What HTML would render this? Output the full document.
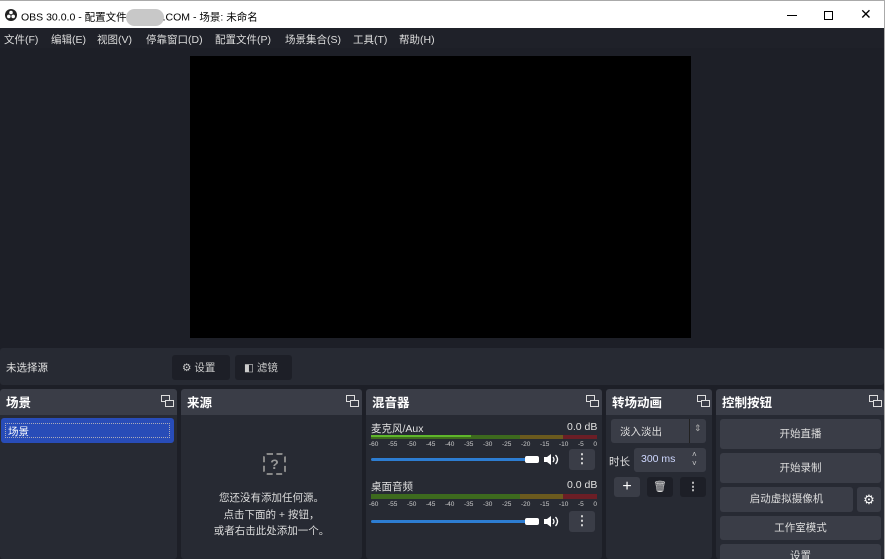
<!DOCTYPE html>
<html style="overflow:hidden;width:887px;height:559px"><head><meta charset="utf-8"><style>
*{box-sizing:border-box;margin:0;padding:0}
body{width:887px;height:559px;background:#fff;font-family:"Liberation Sans","Noto Sans CJK SC",sans-serif;font-size:11px;color:#e0e0e0;position:relative;overflow:hidden}
.a{position:absolute}
.win{left:0;top:0;width:885px;height:559px;border-right:1px solid #aaa;border-top:1px solid #aaa;background:#1d1f27}
.title{left:0;top:1px;width:884px;height:27px;background:#fff;color:#000;font-size:11px}
.menu{left:0;top:28px;width:884px;height:20px;background:#1f2129;color:#ddd}
.menu span{position:absolute;top:4px;font-size:10.5px}
.dock{background:#272a33;border-radius:3px;overflow:hidden}
.hd{background:#3a3d47;height:26px;border-radius:3px 3px 0 0;font-size:12.5px;font-weight:bold;color:#fff;padding:3px 6px}
.btn{background:#3a3d47;border-radius:3px;text-align:center;color:#ddd;font-size:10.5px}
.dk{background:#1d1f27;border-radius:3px}
.scale{font-size:6.5px;color:#ccc;width:228px;display:flex;justify-content:space-between}
</style></head><body>
<div class="a win"></div>
<div class="a title">
<svg class="a" style="left:5px;top:8px" width="12" height="12" viewBox="0 0 12 12"><circle cx="6" cy="6" r="6" fill="#222"/><circle cx="6" cy="3.5" r="1.8" fill="#fff"/><circle cx="3.8" cy="7.4" r="1.8" fill="#fff"/><circle cx="8.2" cy="7.4" r="1.8" fill="#fff"/></svg>
<span class="a" style="left:21px;top:8px;font-size:10.5px;white-space:nowrap">OBS 30.0.0 - 配置文件<span style="display:inline-block;width:38px;height:17px;border-radius:9px;background:#c8c8c8;vertical-align:middle;margin:0 -1px"></span>.COM - 场景: 未命名</span>
<div class="a" style="left:787px;top:14px;width:10px;height:1px;background:#000"></div>
<div class="a" style="left:824px;top:10px;width:9px;height:9px;border:1px solid #000"></div>
<span class="a" style="left:860px;top:5px;font-size:14px">✕</span>
</div>
<div class="a menu">
<span style="left:4px">文件(F)</span><span style="left:51px">编辑(E)</span><span style="left:97px">视图(V)</span><span style="left:146px">停靠窗口(D)</span><span style="left:215px">配置文件(P)</span><span style="left:285px">场景集合(S)</span><span style="left:353px">工具(T)</span><span style="left:399px">帮助(H)</span>
</div>
<div class="a" style="left:190px;top:56px;width:501px;height:282px;background:#000"></div>
<div class="a dock" style="left:0;top:348px;width:884px;height:37px"></div>
<span class="a" style="left:6px;top:360px;font-size:10.5px">未选择源</span>
<div class="a dk" style="left:172px;top:355px;width:58px;height:25px"></div>
<span class="a" style="left:182px;top:360px;font-size:10.5px;color:#ccc">⚙ 设置</span>
<div class="a dk" style="left:235px;top:355px;width:57px;height:25px"></div>
<span class="a" style="left:244px;top:360px;font-size:10.5px;color:#ccc">◧ 滤镜</span>

<div class="a dock" style="left:0;top:389px;width:177px;height:170px"><div class="hd">场景</div></div>
<div class="a" style="left:1px;top:418px;width:173px;height:25px;background:#284cb8;border-radius:3px"></div>
<div class="a" style="left:5px;top:423px;width:165px;height:15px;border:1px dotted #aab"></div>
<span class="a" style="left:8px;top:424px;font-size:10.5px;color:#fff">场景</span>
<div class="a dock" style="left:181px;top:389px;width:181px;height:170px"><div class="hd">来源</div></div>
<div class="a" style="left:263px;top:453px;width:23px;height:22px;border:2px dashed #888;border-radius:4px;color:#999;font-size:14px;font-weight:bold;text-align:center;line-height:18px">?</div>
<div class="a" style="left:181px;top:490px;width:181px;text-align:center;font-size:10.5px;line-height:16.5px;color:#ddd">您还没有添加任何源。<br>点击下面的 + 按钮，<br>或者右击此处添加一个。</div>
<div class="a dock" style="left:366px;top:389px;width:236px;height:170px"><div class="hd">混音器</div></div>
<span class="a" style="left:371px;top:421px;font-size:10.5px">麦克风/Aux</span><span class="a" style="left:567px;top:421px;font-size:10.5px">0.0 dB</span>
<div class="a" style="left:371px;top:435px;width:226px;height:4px;background:linear-gradient(90deg,#3d6a1e 0 66%,#6b5a1e 66% 85%,#6b1e26 85%)"></div>
<div class="a" style="left:371px;top:435px;width:100px;height:2px;background:#5fb62b"></div>
<div class="a scale" style="left:369px;top:441px"><span>-60</span><span>-55</span><span>-50</span><span>-45</span><span>-40</span><span>-35</span><span>-30</span><span>-25</span><span>-20</span><span>-15</span><span>-10</span><span>-5</span><span>0</span></div>
<div class="a" style="left:371px;top:458px;width:160px;height:3px;background:#2d7dd2;border-radius:2px"></div>
<div class="a" style="left:525px;top:456px;width:14px;height:7px;background:#fff;border-radius:2px"></div>
<svg class="a" style="left:543px;top:453px" width="16" height="13" viewBox="0 0 16 13"><path d="M1 4h3l4-3v11l-4-3H1z" fill="#fff"/><path d="M10 4q2 2.5 0 5M12.5 2q4 4.5 0 9" stroke="#fff" stroke-width="1.3" fill="none"/></svg>
<div class="a btn" style="left:569px;top:449px;width:26px;height:21px;font-size:13px;font-weight:bold;line-height:20px">⋮</div>
<span class="a" style="left:371px;top:479px;font-size:10.5px">桌面音频</span><span class="a" style="left:567px;top:479px;font-size:10.5px">0.0 dB</span>
<div class="a" style="left:371px;top:494px;width:226px;height:5px;background:linear-gradient(90deg,#3d6a1e 0 66%,#6b5a1e 66% 85%,#6b1e26 85%)"></div>
<div class="a scale" style="left:369px;top:501px"><span>-60</span><span>-55</span><span>-50</span><span>-45</span><span>-40</span><span>-35</span><span>-30</span><span>-25</span><span>-20</span><span>-15</span><span>-10</span><span>-5</span><span>0</span></div>
<div class="a" style="left:371px;top:520px;width:160px;height:3px;background:#2d7dd2;border-radius:2px"></div>
<div class="a" style="left:525px;top:518px;width:14px;height:7px;background:#fff;border-radius:2px"></div>
<svg class="a" style="left:543px;top:515px" width="16" height="13" viewBox="0 0 16 13"><path d="M1 4h3l4-3v11l-4-3H1z" fill="#fff"/><path d="M10 4q2 2.5 0 5M12.5 2q4 4.5 0 9" stroke="#fff" stroke-width="1.3" fill="none"/></svg>
<div class="a btn" style="left:569px;top:511px;width:26px;height:21px;font-size:13px;font-weight:bold;line-height:20px">⋮</div>
<div class="a dock" style="left:606px;top:389px;width:106px;height:170px"><div class="hd">转场动画</div></div>
<div class="a btn" style="left:611px;top:419px;width:95px;height:24px;text-align:left;padding:5px 9px">淡入淡出</div>
<div class="a" style="left:689px;top:419px;width:1px;height:24px;background:#222"></div>
<span class="a" style="left:694px;top:423px;font-size:9px;color:#aaa">⇕</span>
<span class="a" style="left:609px;top:454px;font-size:10.5px">时长</span>
<div class="a btn" style="left:634px;top:448px;width:72px;height:24px;text-align:left;padding:5px 7px;color:#cfd8ff">300 ms</div>
<span class="a" style="left:692px;top:450px;font-size:8px;color:#ccc;line-height:9px">˄<br>˅</span>
<div class="a btn" style="left:614px;top:477px;width:26px;height:20px;font-size:16px;line-height:19px;color:#fff">+</div>
<div class="a dk" style="left:647px;top:477px;width:26px;height:20px;color:#ddd;text-align:center;line-height:20px">🗑︎</div>
<div class="a dk" style="left:680px;top:477px;width:26px;height:20px;color:#ddd;text-align:center;line-height:20px;font-weight:bold">⋮</div>
<div class="a dock" style="left:716px;top:389px;width:168px;height:170px"><div class="hd">控制按钮</div></div>
<div class="a btn" style="left:720px;top:419px;width:161px;height:30px;line-height:30px">开始直播</div>
<div class="a btn" style="left:720px;top:453px;width:161px;height:30px;line-height:30px">开始录制</div>
<div class="a btn" style="left:720px;top:487px;width:133px;height:25px;line-height:25px">启动虚拟摄像机</div>
<div class="a btn" style="left:857px;top:487px;width:24px;height:25px;line-height:25px;color:#fff;font-size:13px">⚙</div>
<div class="a btn" style="left:720px;top:516px;width:161px;height:24px;line-height:24px">工作室模式</div>
<div class="a btn" style="left:720px;top:544px;width:161px;height:15px;line-height:24px;overflow:hidden;border-radius:3px 3px 0 0">设置</div>
<svg class="a" style="left:161px;top:395px" width="13" height="13"><rect x="0.5" y="0.5" width="8" height="6" fill="none" stroke="#ddd"/><rect x="4.5" y="5.5" width="8" height="6" fill="#3a3d47" stroke="#ddd"/></svg>
<svg class="a" style="left:346px;top:395px" width="13" height="13"><rect x="0.5" y="0.5" width="8" height="6" fill="none" stroke="#ddd"/><rect x="4.5" y="5.5" width="8" height="6" fill="#3a3d47" stroke="#ddd"/></svg>
<svg class="a" style="left:586px;top:395px" width="13" height="13"><rect x="0.5" y="0.5" width="8" height="6" fill="none" stroke="#ddd"/><rect x="4.5" y="5.5" width="8" height="6" fill="#3a3d47" stroke="#ddd"/></svg>
<svg class="a" style="left:697px;top:395px" width="13" height="13"><rect x="0.5" y="0.5" width="8" height="6" fill="none" stroke="#ddd"/><rect x="4.5" y="5.5" width="8" height="6" fill="#3a3d47" stroke="#ddd"/></svg>
<svg class="a" style="left:869px;top:395px" width="13" height="13"><rect x="0.5" y="0.5" width="8" height="6" fill="none" stroke="#ddd"/><rect x="4.5" y="5.5" width="8" height="6" fill="#3a3d47" stroke="#ddd"/></svg>
</body></html>
